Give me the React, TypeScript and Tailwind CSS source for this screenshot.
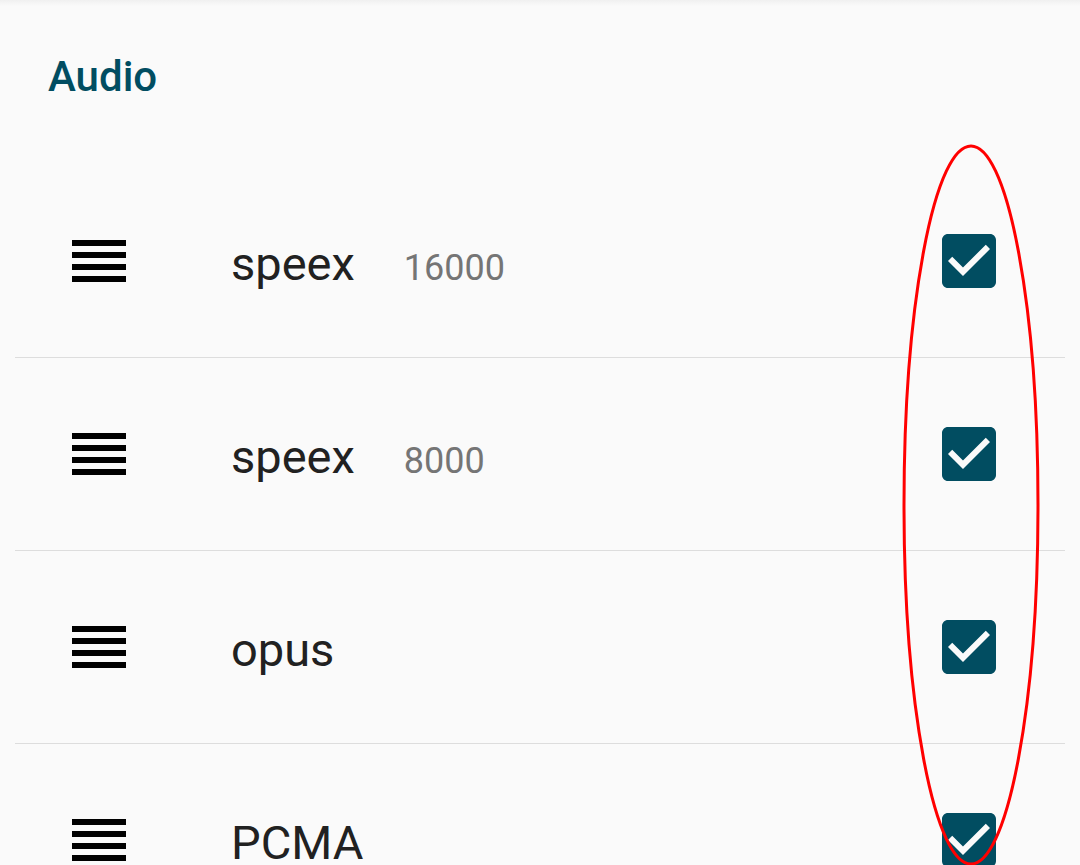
const codecs = [
  { name: "speex", rate: "16000" },
  { name: "speex", rate: "8000" },
  { name: "opus", rate: "" },
  { name: "PCMA", rate: "" },
]

const DragHandle = () => (
  <div className="flex w-[54px] flex-col gap-[6px]">
    <div className="h-[6px] bg-black" />
    <div className="h-[6px] bg-black" />
    <div className="h-[6px] bg-black" />
    <div className="h-[6px] bg-black" />
  </div>
)

const CheckBox = () => (
  <svg width="72" height="72" viewBox="0 0 24 24" className="-m-[9px]">
    <path
      fill="#014d61"
      d="M19 3H5c-1.11 0-2 .9-2 2v14c0 1.1.89 2 2 2h14c1.11 0 2-.9 2-2V5c0-1.1-.89-2-2-2zm-9 14l-5-5 1.41-1.41L10 14.17l7.59-7.59L19 8l-9 9z"
    />
  </svg>
)

const App = () => {
  return (
    <div className="relative h-[865px] w-[1080px] overflow-hidden bg-[#fafafa] font-['Roboto',sans-serif]">
      {/* toolbar shadow */}
      <div className="absolute inset-x-0 top-0 h-[6px] bg-gradient-to-b from-[#f0f0f0] to-transparent" />

      <div className="h-[165px] pl-[48px] pt-[52px]">
        <h2 className="text-[42px] leading-[50px] font-medium text-[#014d61]">Audio</h2>
      </div>

      {codecs.map((c, i) => (
        <div key={i}>
          <div className="flex h-[192px] items-center pl-[72px] pr-[84px]">
            <DragHandle />
            <div className="ml-[105px] flex items-baseline gap-[49px] pt-[4px]">
              <span className="text-[47px] leading-[47px] text-[#212121]">{c.name}</span>
              {c.rate && <span className="text-[36px] leading-[36px] text-[#757575]">{c.rate}</span>}
            </div>
            <div className="ml-auto">
              <CheckBox />
            </div>
          </div>
          <div className="mx-[15px] h-px bg-[#dddddd]" />
        </div>
      ))}

      {/* red annotation ellipse */}
      <svg className="pointer-events-none absolute left-0 top-0" width="1080" height="865">
        <ellipse cx="971" cy="505" rx="67" ry="359" fill="none" stroke="#ff0000" strokeWidth="3" />
      </svg>
    </div>
  )
}

export default App
